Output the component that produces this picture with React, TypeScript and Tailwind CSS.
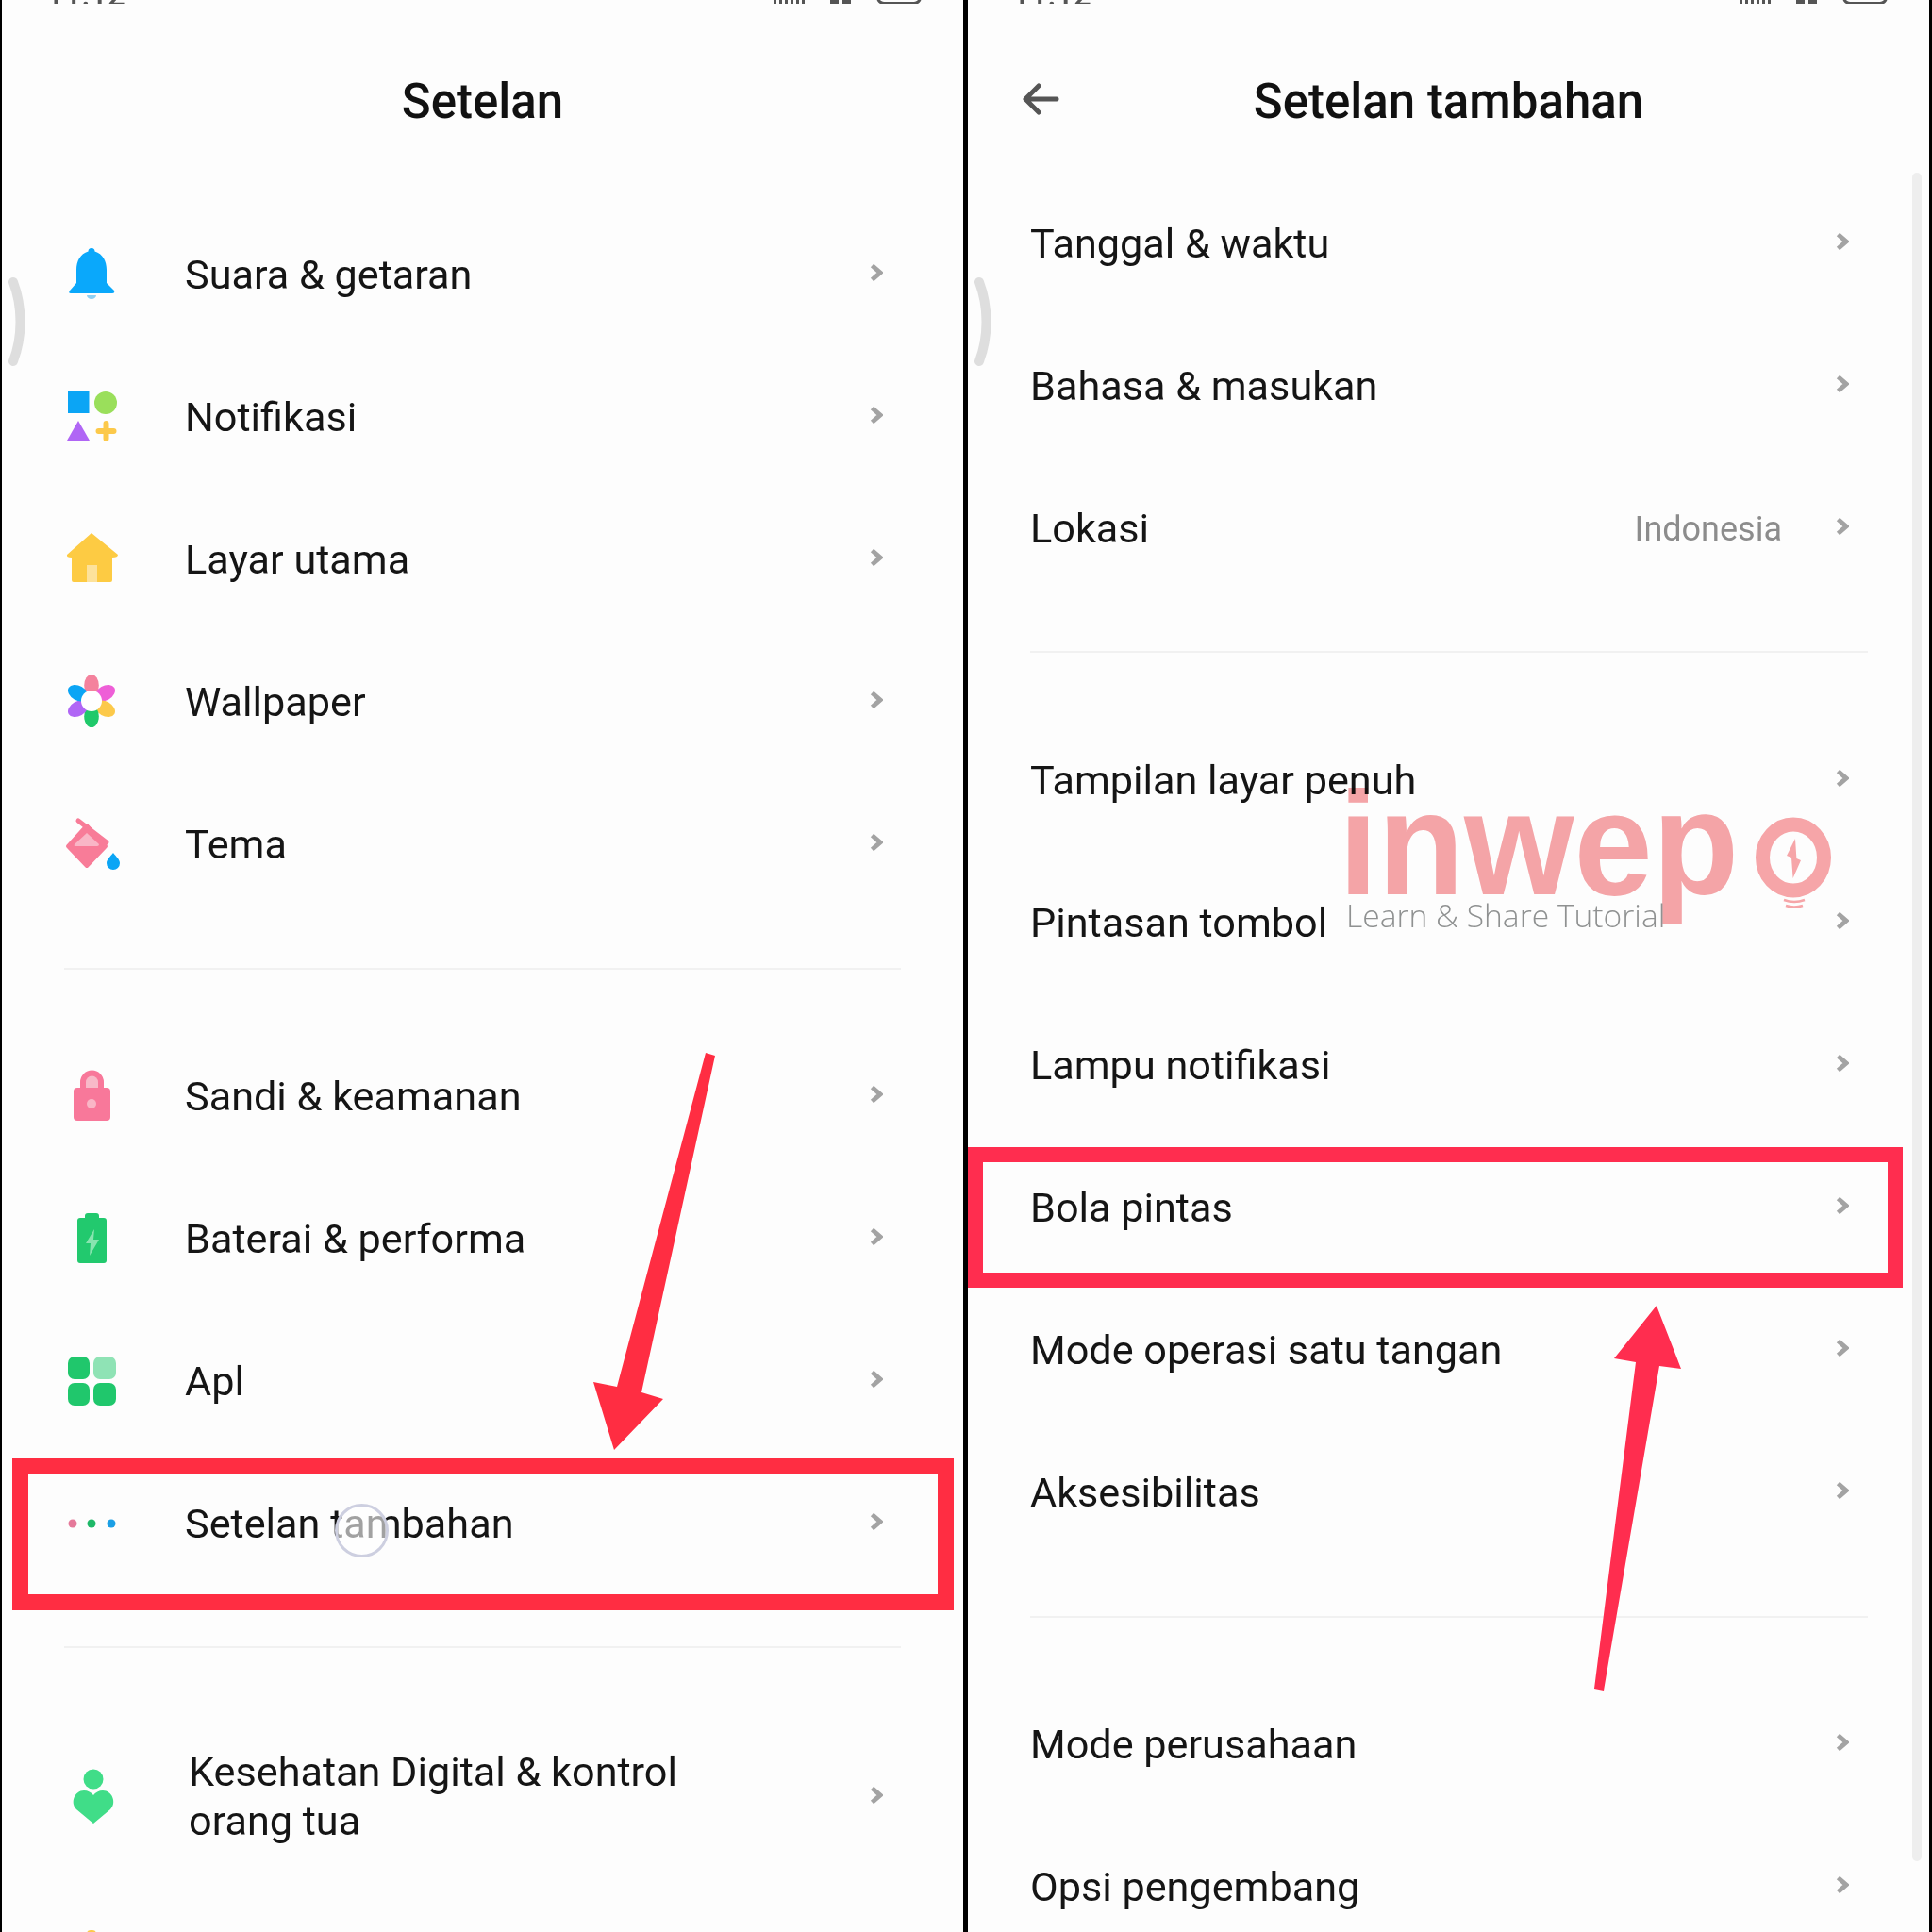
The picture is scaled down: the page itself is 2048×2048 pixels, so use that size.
import React from "react";

const Box = ({ children }: { children: React.ReactNode }) => (
  <svg width="64" height="64" viewBox="0 0 64 64" className="shrink-0">{children}</svg>
);

const Bell = () => (
  <Box>
    <path d="M32 5a3.5 3.5 0 0 1 3.5 3.5C44 11 48 19 48 28V42L56 50Q57 53 54 53H10Q7 53 9 50L16 42V28C16 19 20 11 28.5 8.5A3.5 3.5 0 0 1 32 5Z" fill="#0aa8fb" />
    <path d="M27 55h10a5 4 0 0 1-10 0Z" fill="#8fd0f3" />
  </Box>
);
const Shapes = () => (
  <Box>
    <rect x="7" y="6" width="22.5" height="23" fill="#0ba5f5" />
    <circle cx="47" cy="18" r="12" fill="#9adf5b" />
    <path d="M18 37L30 58H6Z" fill="#b066f5" />
    <path d="M47.5 40V56M39.5 48H55.5" stroke="#fcc94a" strokeWidth="6" strokeLinecap="round" />
  </Box>
);
const Home = () => (
  <Box>
    <path d="M32 5L60 28Q60 31 54 31V55Q54 57 52 57H13Q11 57 11 55V31Q5 31 6 28Z" fill="#fdcb43" />
    <rect x="27" y="39" width="11" height="18" fill="#fde29b" />
  </Box>
);
const Flower = () => (
  <Box>
    {["#f4829d", "#ee5fd7", "#fcc94a", "#1fc96a", "#b066f5", "#0ba5f5"].map((c, i) => (
      <ellipse key={c} cx="32" cy="15.5" rx="7.8" ry="11.5" fill={c} transform={`rotate(${i * 60} 32 32)`} />
    ))}
    <circle cx="32" cy="32" r="11" fill="#fff" />
  </Box>
);
const Bucket = () => (
  <Box>
    <path d="M18 8L48 31" stroke="#f87c98" strokeWidth="5" strokeLinecap="round" />
    <path d="M27 13L47 35L27 56L7 35Z" fill="#f87c98" stroke="#f87c98" strokeWidth="4" strokeLinejoin="round" />
    <path d="M27 21L40 33Q40 35 38 35H15Q13 35 14 33Z" fill="#f9b6c6" />
    <path d="M55 42C58 46 62 49 62 53A7 7 0 0 1 48 53C48 49 52 46 55 42Z" fill="#0ba5f5" />
  </Box>
);
const Lock = () => (
  <Box>
    <path d="M20 26V18a12.5 12.5 0 0 1 25 0V26Z" fill="#f8789a" />
    <path d="M26 25V18a6.5 6.5 0 0 1 13 0V25Z" fill="#f8b9c8" />
    <rect x="13" y="24" width="39" height="35" rx="4" fill="#f8789a" />
    <circle cx="32" cy="41" r="5" fill="#f9b6c6" />
  </Box>
);
const Battery = () => (
  <Box>
    <path d="M25 11V9Q25 6 28 6H37Q40 6 40 9V11H45Q48 11 48 14V56Q48 59 45 59H20Q17 59 17 56V14Q17 11 20 11Z" fill="#22c96e" />
    <path d="M35 23L26 38H31L30 51L40 34H34Z" fill="#88e4af" />
  </Box>
);
const Apps = () => (
  <Box>
    <rect x="7" y="7" width="23" height="24" rx="7" fill="#20c76c" />
    <rect x="34" y="7" width="24" height="24" rx="7" fill="#8fe3b5" />
    <rect x="7" y="35" width="23" height="24" rx="7" fill="#20c76c" />
    <rect x="34" y="35" width="24" height="24" rx="7" fill="#20c76c" />
  </Box>
);
const Dots = () => (
  <Box>
    <circle cx="12" cy="33" r="4.5" fill="#e5799a" />
    <circle cx="32" cy="33" r="4.5" fill="#1eb868" />
    <circle cx="53" cy="33" r="4.5" fill="#1b9fe5" />
  </Box>
);
const Wellbeing = () => (
  <Box>
    <circle cx="32" cy="15" r="10.5" fill="#40dd88" />
    <path d="M32 62L14 47C7 40 12 27 22 27C26 27 30 29 32 32C34 29 38 27 42 27C52 27 57 40 50 47Z" fill="#40dd88" />
  </Box>
);

const Chevron = () => (
  <svg width="14" height="20" viewBox="0 0 14 20" className="shrink-0">
    <path d="M2.5 2.5L11 10L2.5 17.5" fill="none" stroke="#a3a3a3" strokeWidth="5" />
  </svg>
);

const IconRow = ({ icon, label }: { icon: React.ReactNode; label: string }) => (
  <div className="flex h-[151px] items-center pl-[63px] pr-[85px]">
    <div className="-mt-[4px] mr-[67px] flex">{icon}</div>
    <div className="flex-1 text-[43.2px] leading-[52px] text-[#151515]">{label}</div>
    <div className="-mt-[5px] flex"><Chevron /></div>
  </div>
);

const PlainRow = ({ label, value }: { label: string; value?: string }) => (
  <div className="flex h-[151px] items-center pl-[66px] pr-[85px]">
    <div className="flex-1 text-[43.2px] leading-[52px] text-[#151515]">{label}</div>
    {value && <div className="mr-[57px] text-[36px] leading-[52px] text-[#8c8c8c]">{value}</div>}
    <div className="-mt-[5px] flex"><Chevron /></div>
  </div>
);

const Status = () => (
  <div className="flex h-[4px] items-end justify-between overflow-hidden">
    <div className="-mb-[7px] ml-[47px] text-[33px] font-medium leading-none text-[#555555]">11:12</div>
    <div className="mr-[44px] flex items-end gap-[27px]">
      <div className="flex items-end gap-[3px]">
        {[0, 1, 2, 3, 4, 5].map((i) => (
          <div key={i} className="h-[4px] w-[3px] bg-[#555555]" />
        ))}
      </div>
      <div className="flex gap-[4px]">
        <div className="h-[4px] w-[9px] bg-[#555555]" />
        <div className="h-[4px] w-[9px] bg-[#555555]" />
      </div>
      <div className="h-[12px] w-[48px] -mb-[1px] rounded-b-[8px] border-[3px] border-[#555555]" />
    </div>
  </div>
);

const Title = ({ children }: { children: React.ReactNode }) => (
  <div className="pt-[76px] text-center text-[51px] font-medium leading-[56px] text-[#111111]">{children}</div>
);

const Rule = ({ className }: { className: string }) => <div className={`h-[2px] bg-[#f1f1f1] ${className}`} />;

const Handle = () => (
  <svg width="24" height="96" viewBox="0 0 24 96" className="absolute left-[4px] top-[293px]">
    <path d="M8 6C18 32 18 64 8 90" fill="none" stroke="#dedede" strokeWidth="10" strokeLinecap="round" />
  </svg>
);

export default function App() {
  return (
    <div className="relative flex h-[2048px] w-[2048px] gap-[5px] overflow-hidden bg-black pl-[2px] pr-[3px] font-['Roboto',sans-serif]">
      {/* Left phone */}
      <div className="relative h-full w-[1019px] overflow-hidden bg-[#fdfdfd]">
        <Status />
        <Title>Setelan</Title>
        <div className="mt-[80px]">
          <IconRow icon={<Bell />} label="Suara & getaran" />
          <IconRow icon={<Shapes />} label="Notifikasi" />
          <IconRow icon={<Home />} label="Layar utama" />
          <IconRow icon={<Flower />} label="Wallpaper" />
          <IconRow icon={<Bucket />} label="Tema" />
        </div>
        <Rule className="ml-[66px] mr-[66px] mt-[55px]" />
        <div className="mt-[59px]">
          <IconRow icon={<Lock />} label="Sandi & keamanan" />
          <IconRow icon={<Battery />} label="Baterai & performa" />
          <IconRow icon={<Apps />} label="Apl" />
          <IconRow icon={<Dots />} label="Setelan tambahan" />
        </div>
        <Rule className="ml-[66px] mr-[66px] mt-[54px]" />
        <div className="mt-[60px] flex h-[196px] items-center pl-[65px] pr-[85px]">
          <div className="-mt-[4px] mr-[69px] flex"><Wellbeing /></div>
          <div className="flex-1 text-[43.2px] leading-[52px] text-[#151515]">
            Kesehatan Digital &amp; kontrol
            <br />
            orang tua
          </div>
          <div className="-mt-[5px] flex"><Chevron /></div>
        </div>
        <div className="ml-[90px] mt-[43px] h-[4px] w-[10px] rounded-t-full bg-[#fcc94a]" />
        <Handle />
      </div>

      {/* Right phone */}
      <div className="relative h-full w-[1019px] overflow-hidden bg-[#fdfdfd]">
        <Status />
        <div className="relative">
          <Title>Setelan tambahan</Title>
          <svg width="40" height="34" viewBox="0 0 40 34" className="absolute left-[58px] top-[84px]">
            <path d="M36 17H4M17 3L3 17L17 31" fill="none" stroke="#555555" strokeWidth="5" strokeLinecap="round" strokeLinejoin="round" />
          </svg>
        </div>
        <div className="mt-[47px]">
          <PlainRow label="Tanggal & waktu" />
          <PlainRow label="Bahasa & masukan" />
          <PlainRow label="Lokasi" value="Indonesia" />
        </div>
        <Rule className="ml-[66px] mr-[65px] mt-[54px]" />
        <div className="mt-[60px]">
          <PlainRow label="Tampilan layar penuh" />
          <PlainRow label="Pintasan tombol" />
          <PlainRow label="Lampu notifikasi" />
          <PlainRow label="Bola pintas" />
          <PlainRow label="Mode operasi satu tangan" />
          <PlainRow label="Aksesibilitas" />
        </div>
        <Rule className="ml-[66px] mr-[65px] mt-[55px]" />
        <div className="mt-[59px]">
          <PlainRow label="Mode perusahaan" />
          <PlainRow label="Opsi pengembang" />
        </div>
        <Handle />
        <div className="absolute left-[1001px] top-[183px] h-[1790px] w-[10px] rounded-full bg-[#eeeeee]" />
      </div>

      {/* Annotations */}
      <div className="absolute left-[13px] top-[1546px] h-[161px] w-[998px] border-[17px] border-[#ff2d42]" />
      <div className="absolute left-[1026px] top-[1216px] h-[149px] w-[991px] border-[16px] border-[#ff2d4f]" />
      <svg width="2048" height="2048" viewBox="0 0 2048 2048" className="pointer-events-none absolute left-0 top-0">
        <polygon points="748,1116 758,1119 680,1476 703,1483 651,1537 629,1465 654,1470" fill="#ff2d42" />
        <polygon points="1756,1384 1782,1451 1759,1448 1700,1792 1690,1790 1734,1444 1711,1440" fill="#ff2d4f" />
      </svg>

      {/* Tap indicator */}
      <div className="absolute left-[355px] top-[1594px] h-[57px] w-[57px] rounded-full border-[3px] border-[#cdcfe0] bg-white/60" />

      {/* Watermark */}
      <div className="pointer-events-none absolute left-[1419px] top-[816px] origin-left scale-x-[0.96] font-['Liberation_Sans',sans-serif] text-[156px] font-bold leading-[156px] text-[#f6a5a8] mix-blend-multiply">
        inwep
      </div>
      <svg width="90" height="110" viewBox="0 0 90 110" className="pointer-events-none absolute left-[1856px] top-[860px]">
        <ellipse cx="45" cy="49" rx="32.5" ry="35" fill="none" stroke="#f6a5a8" strokeWidth="15" />
        <path d="M47 29L38 47L43 49L44.6 71L53 52L48.4 50Z" fill="#f6a5a8" />
        <path d="M35 94Q46 98 57 94M37 100Q46 103 55 100" fill="none" stroke="#f6a5a8" strokeWidth="2.5" />
      </svg>
      <div className="pointer-events-none absolute left-[1427px] top-[945px] font-['Open_Sans',sans-serif] text-[33.6px] font-light leading-[50px] text-[#8f9191]">
        Learn &amp; Share Tutorial
      </div>
    </div>
  );
}
